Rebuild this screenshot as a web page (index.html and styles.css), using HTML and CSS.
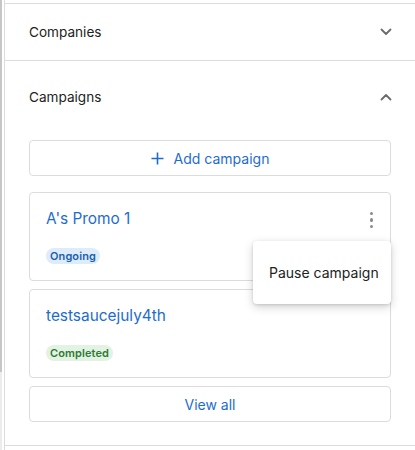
FILE: index.html
```html
<!DOCTYPE html>
<html>
<head>
<meta charset="utf-8">
<link rel="stylesheet" href="styles.css">
</head>
<body>
<div class="frame">
  <div class="rail"><div class="thumb"></div></div>
  <div class="gap"></div>
  <div class="panel">
    <div class="section">
      <div class="section-head">
        <span class="section-title">Companies</span>
        <svg class="chev" width="12" height="8" viewBox="0 0 12 8"><path d="M1.5 1.5 L6 6 L10.5 1.5" fill="none" stroke="#6b6b6b" stroke-width="1.8" stroke-linecap="round" stroke-linejoin="round"/></svg>
      </div>
    </div>
    <div class="section open">
      <div class="section-head">
        <span class="section-title">Campaigns</span>
        <svg class="chev" width="12" height="8" viewBox="0 0 12 8"><path d="M1.5 6.5 L6 2 L10.5 6.5" fill="none" stroke="#6b6b6b" stroke-width="1.8" stroke-linecap="round" stroke-linejoin="round"/></svg>
      </div>
      <div class="section-body">
        <button class="btn add"><svg width="13" height="13" viewBox="0 0 13 13"><path d="M6.5 0.5 V12.5 M0.5 6.5 H12.5" stroke="#1d6cd0" stroke-width="1.6"/></svg><span>Add campaign</span></button>
        <div class="card">
          <div class="card-top">
            <span class="card-title">A's Promo 1</span>
            <span class="kebab"><i></i><i></i><i></i></span>
          </div>
          <span class="badge ongoing">Ongoing</span>
          <div class="menu"><div class="menu-item">Pause campaign</div></div>
        </div>
        <div class="card">
          <div class="card-top">
            <span class="card-title">testsaucejuly4th</span>
          </div>
          <span class="badge completed">Completed</span>
        </div>
        <button class="btn view">View all</button>
      </div>
    </div>
  </div>
</div>
</body>
</html>
```

FILE: styles.css
```css
* { box-sizing: border-box; }
html, body { margin: 0; padding: 0; background: #fff; }
body {
  width: 415px;
  height: 450px;
  overflow: hidden;
  font-family: Inter, "Liberation Sans", sans-serif;
  color: #222;
}
.frame {
  display: flex;
  height: 450px;
}
.rail {
  width: 2px;
  background: #ececec;
  flex: none;
}
.thumb {
  height: 372px;
  background: #c6c6c6;
}
.gap {
  width: 2px;
  flex: none;
}
.panel {
  flex: 1;
  border-left: 1px solid #dcdcdc;
  padding-top: 3px;
  display: flex;
  flex-direction: column;
}
.section {
  border-top: 1px solid #dcdcdc;
}
.section.open {
  border-bottom: 1px solid #dcdcdc;
}
.section-head {
  height: 56px;
  display: flex;
  align-items: center;
  justify-content: space-between;
  padding: 0 23px 0 24px;
}
.section.open .section-head {
  height: 71px;
  padding-top: 1px;
}
.section-title {
  font-size: 13.6px;
  color: #222;
}
.section-body {
  padding: 8px 24px 23px 24px;
  display: flex;
  flex-direction: column;
  gap: 8px;
}
.btn {
  height: 36px;
  border: 1px solid #dcdcdc;
  border-radius: 4px;
  background: #fff;
  font-family: inherit;
  font-size: 14px;
  color: #1d6cd0;
  display: flex;
  align-items: center;
  justify-content: center;
  gap: 10px;
  padding: 0;
  flex: none;
}
.btn.add { margin-bottom: 8px; }
.card {
  position: relative;
  height: 89px;
  flex: none;
  border: 1px solid #dcdcdc;
  border-radius: 4px;
  padding: 13px 16px 0 16px;
  display: flex;
  flex-direction: column;
  align-items: flex-start;
}
.card-top {
  align-self: stretch;
  display: flex;
  align-items: center;
  justify-content: space-between;
  height: 24px;
}
.card-title {
  font-size: 15.4px;
  color: #1d6cd0;
}
.kebab {
  display: flex;
  flex-direction: column;
  gap: 3px;
  margin-right: 1px;
  margin-top: 4px;
}
.kebab i {
  display: block;
  width: 3.5px;
  height: 3.5px;
  border-radius: 50%;
  background: #8a8a8a;
}
.badge {
  margin-top: 18px;
  font-size: 11px;
  font-weight: 600;
  height: 16px;
  line-height: 16px;
  padding: 0 4px;
  border-radius: 8px;
  letter-spacing: 0.1px;
}
.badge.ongoing { background: #dcecfb; color: #1c5fae; }
.badge.completed { background: #e2f2e3; color: #2f7a35; }
.menu {
  position: absolute;
  right: -1px;
  top: 48px;
  width: 138px;
  height: 63px;
  background: #fff;
  border-radius: 4px;
  box-shadow: 0 3px 10px rgba(0,0,0,0.18), 0 1px 3px rgba(0,0,0,0.12);
  z-index: 5;
  display: flex;
  align-items: center;
}
.menu-item {
  padding-left: 16px;
  font-size: 14px;
  color: #222;
}
```
